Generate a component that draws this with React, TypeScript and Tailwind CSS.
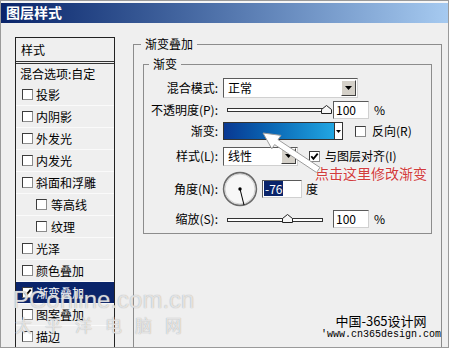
import React from "react";

// Photoshop "Layer Style" dialog – gradient overlay panel
const sunken =
  "border border-t-[#5a5a5a] border-l-[#5a5a5a] border-r-[#d0d0d0] border-b-[#d0d0d0] bg-white";

function Check({ checked = false }: { checked?: boolean }) {
  return (
    <span className="flex h-[11px] w-[11px] shrink-0 items-center justify-center border border-t-[#3c3c3c] border-l-[#3c3c3c] border-r-[#8c8c8c] border-b-[#8c8c8c] bg-white">
      {checked && (
        <svg width="9" height="9" viewBox="0 0 9 9">
          <path d="M1.3 4.3 L3.4 6.9 L7.7 1.6" fill="none" stroke="#000" strokeWidth="1.8" />
        </svg>
      )}
    </span>
  );
}

function DropButton() {
  return (
    <span className="flex h-[16px] w-[15px] shrink-0 items-center justify-center border border-t-white border-l-white border-r-[#404040] border-b-[#404040] bg-[#d4d0c8]">
      <svg width="7" height="4" viewBox="0 0 7 4">
        <path d="M0 0H7L3.5 4Z" fill="#000" />
      </svg>
    </span>
  );
}

function Thumb() {
  return (
    <svg width="11" height="9" viewBox="0 0 11 9">
      <path d="M0.5 8.5V4.5L5.5 0.5L10.5 4.5V8.5Z" fill="#f6f6f6" stroke="#222" />
    </svg>
  );
}

const styles = [
  "投影",
  "内阴影",
  "外发光",
  "内发光",
  "斜面和浮雕",
  "*等高线",
  "*纹理",
  "光泽",
  "颜色叠加",
  "!渐变叠加",
  "图案叠加",
  "描边",
];

export default function App() {
  return (
    <div className="relative flex h-[348px] w-[449px] flex-col overflow-hidden border border-[#9a9a9a] bg-[#efefef] font-['Noto_Sans_CJK_SC','Noto_Sans',sans-serif] text-[12px] text-black">
      {/* title bar */}
      <div className="h-[22px] shrink-0 border-t-2 border-[#f6f6f6] bg-linear-to-r from-[#0a246a] to-[#a6caf0] pl-[5px] text-[14px] leading-[19px] font-bold text-white">
        图层样式
      </div>

      <div className="flex flex-1">
        {/* style list */}
        <div className="ml-[14px] mt-[14px] flex h-[330px] w-[100px] shrink-0 flex-col border border-[#222]">
          <div className="flex h-[23px] items-center pl-[5px]">样式</div>
          <div className="h-[3px] border-b-[3px] border-double border-[#333]" />
          <div className="flex h-[20px] items-center pl-[4px]">混合选项:自定</div>
          {styles.map((s) => {
            const sub = s.startsWith("*");
            const sel = s.startsWith("!");
            const label = s.replace(/^[*!]/, "");
            return (
              <div
                key={label}
                className={
                  "flex h-[22px] items-center gap-[3px] border-b border-[#fafafa] " +
                  (sub ? "pl-[20px] " : "pl-[6px] ") +
                  (sel ? "bg-[#0a246a] text-white" : "")
                }
              >
                <Check checked={sel} />
                <span className={sub ? "ml-[1px]" : ""}>{label}</span>
              </div>
            );
          })}
        </div>

        {/* right panel */}
        <fieldset className="ml-[18px] mt-[13px] h-[330px] w-[309px] shrink-0 border border-[#8c8c8c]">
          <legend className="ml-[7px] px-[4px] leading-[16px]">渐变叠加</legend>

          <fieldset className="ml-[9px] mt-[4px] w-[289px] border border-[#8c8c8c] pb-[5px]">
            <legend className="ml-[5px] px-[4px] leading-[16px]">渐变</legend>

            {/* blend mode */}
            <div className="mt-[6px] flex h-[20px] items-center">
              <div className="w-[74px] text-right">混合模式:</div>
              <div className={"ml-[5px] flex h-[20px] w-[135px] items-center justify-between pl-[4px] pr-px " + sunken}>
                <span>正常</span>
                <DropButton />
              </div>
            </div>

            {/* opacity */}
            <div className="mt-[2px] flex h-[20px] items-center">
              <div className="w-[74px] text-right">不透明度(P):</div>
              <div className="relative ml-[9px] h-[20px] w-[102px]">
                <div className="absolute left-0 right-0 top-[8px] h-[4px] border border-[#333] bg-white" />
                <div className="absolute left-[94px] top-[5px]">
                  <Thumb />
                </div>
              </div>
              <div className={"ml-[4px] h-[18px] w-[36px] pl-[2px] leading-[16px] " + sunken}>100</div>
              <span className="ml-[5px]">%</span>
            </div>

            {/* gradient */}
            <div className="mt-[2px] flex h-[18px] items-center">
              <div className="w-[74px] text-right">渐变:</div>
              <div className="ml-[5px] flex h-[18px] w-[120px] border border-[#333] bg-white">
                <div className="h-full w-[110px] bg-linear-to-r from-[#0a3892] to-[#22a6e2]" />
                <div className="flex flex-1 items-center justify-center border-l border-[#333]">
                  <svg width="5" height="3" viewBox="0 0 5 3">
                    <path d="M0 0H5L2.5 3Z" fill="#000" />
                  </svg>
                </div>
              </div>
              <div className="ml-[12px]">
                <Check />
              </div>
              <span className="ml-[6px]">反向(R)</span>
            </div>

            {/* style */}
            <div className="mt-[7px] flex h-[18px] items-center">
              <div className="w-[74px] text-right">样式(L):</div>
              <div className={"ml-[5px] flex h-[19px] w-[75px] items-center justify-between pl-[4px] pr-px " + sunken}>
                <span>线性</span>
                <DropButton />
              </div>
              <div className="ml-[11px]">
                <Check checked />
              </div>
              <span className="ml-[5px]">与图层对齐(I)</span>
            </div>

            {/* angle */}
            <div className="mt-[6px] flex h-[35px] items-center">
              <div className="w-[74px] text-right">角度(N):</div>
              <svg className="ml-[4px]" width="36" height="36" viewBox="0 0 36 36">
                <circle cx="18" cy="18" r="16.4" fill="#f7f7f7" stroke="#6a6a6a" strokeWidth="1.6" />
                <circle cx="18" cy="18" r="15" fill="none" stroke="#c8c8c8" strokeWidth="0.8" />
                <line x1="18" y1="18" x2="22" y2="34" stroke="#000" strokeWidth="1" />
                <circle cx="18" cy="18" r="1.7" fill="#000" />
              </svg>
              <div className={"ml-[4px] flex h-[18px] w-[40px] items-center pl-px " + sunken}>
                <span className="bg-[#0a246a] px-px leading-[15px] text-white">-76</span>
              </div>
              <span className="ml-[4px]">度</span>
            </div>

            {/* scale */}
            <div className="mt-[4px] flex h-[18px] items-center">
              <div className="w-[74px] text-right">缩放(S):</div>
              <div className="relative ml-[9px] h-[18px] w-[96px]">
                <div className="absolute left-0 right-0 top-[8px] h-[4px] border border-[#333] bg-white" />
                <div className="absolute left-[55px] top-[4px]">
                  <Thumb />
                </div>
              </div>
              <div className={"ml-[10px] h-[18px] w-[36px] pl-[2px] leading-[16px] " + sunken}>100</div>
              <span className="ml-[5px]">%</span>
            </div>
          </fieldset>
        </fieldset>
      </div>

      {/* annotation arrow */}
      <svg className="absolute left-[254px] top-[124px]" width="72" height="56" viewBox="0 0 72 56">
        <path
          d="M8 8 L26 10.4 L23 14.6 L65 42.5 L61.5 47.5 L19.6 19.6 L16.8 23.8 Z"
          fill="#ffffff"
          stroke="#9c9c9c"
          strokeWidth="1"
        />
      </svg>
      <div className="absolute left-[314px] top-[163px] text-[14px] leading-[18px] text-[#d23c3c] [text-shadow:0_0_2px_#fff]">
        点击这里修改渐变
      </div>

      {/* watermarks */}
      <div className="pointer-events-none absolute left-[12px] top-[286px] font-['Liberation_Sans',sans-serif] text-[24px] leading-[26px] text-white/70 [text-shadow:0_0_1px_#999]">
        PConline.com.cn
      </div>
      <div className="pointer-events-none absolute left-[14px] top-[313px] text-[17px] leading-[22px] tracking-[13px] text-white/70 [text-shadow:0_0_1px_#999]">
        太平洋电脑网
      </div>
      <div className="absolute left-[315px] top-[311px] w-[130px] text-center">
        <div className="text-[13px] leading-[17px]">中国-365设计网</div>
        <div className="font-['Liberation_Mono',monospace] text-[10px] leading-[12px]">'www.cn365design.com</div>
      </div>
    </div>
  );
}
